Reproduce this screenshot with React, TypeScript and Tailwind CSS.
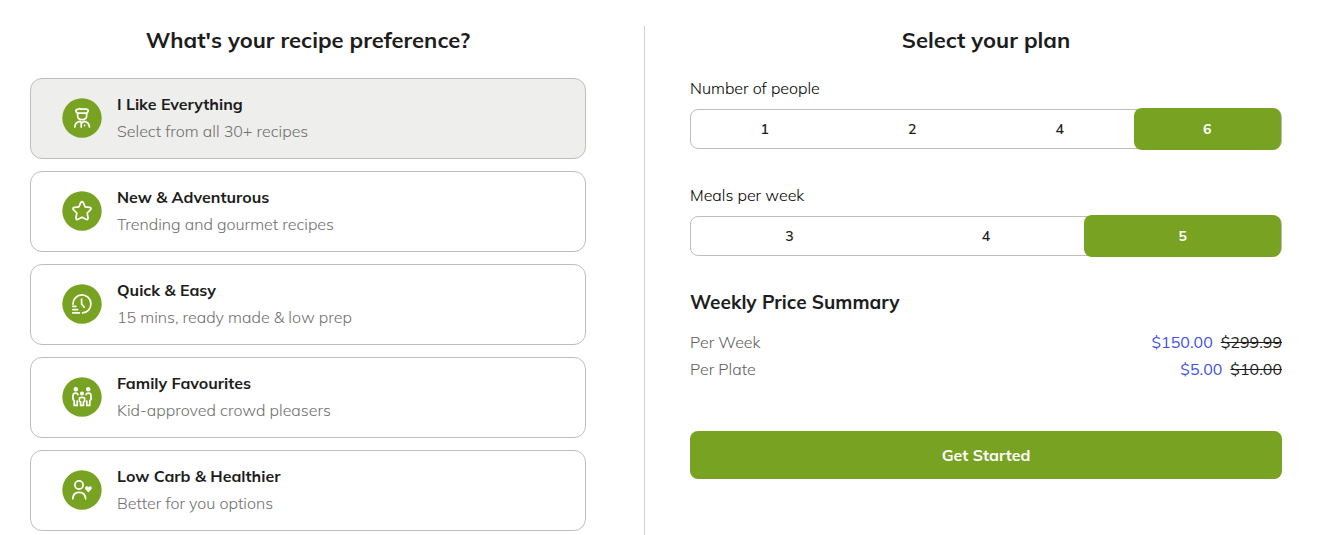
import React, { useState } from 'react';

const iconProps = {
    viewBox: '0 0 40 40',
    className: 'h-10 w-10 shrink-0',
    fill: 'none',
    stroke: 'white',
    strokeWidth: 1.7,
    strokeLinecap: 'round' as const,
    strokeLinejoin: 'round' as const,
    'aria-hidden': true,
};

const Disc: React.FC = () => <circle cx="20" cy="20" r="19.7" fill="#78a222" stroke="none" />;

const ChefIcon: React.FC = () => (
    <svg {...iconProps}>
        <Disc />
        <path d="M15.4 15.2 L14.4 14.2 C13.2 12.6 14.2 11 16 11.4 C17 10.6 18.4 10.7 19 11.4 C20 10.7 21 10.7 22 11.4 C23 10.7 24 10.9 24.6 11.4 C26.2 11.2 26.8 12.8 25.6 14.2 L24.8 15.2 Z" />
        <path d="M15.6 15.6 V18 C15.6 20.2 17.4 21.6 20 21.6 S24.6 20.2 24.6 18 V15.6" />
        <path d="M12.8 29 C13 25.6 15.2 23.8 18 23.4 L20 24.8 L22.2 23.4 C25 23.8 27.2 25.6 27.4 29 M19.2 25 V29 M22.6 27.4 V27.5" />
    </svg>
);

const StarIcon: React.FC = () => (
    <svg {...iconProps}>
        <Disc />
        <path d="M18.7 11.6 Q20 9.6 21.3 11.6 L23 15.8 L27.6 16.4 Q30 17 28.4 18.9 L25.2 22 L26 26.6 Q26.2 29.2 24 28.3 L20 26.2 L16 28.3 Q13.8 29.2 14 26.6 L14.8 22 L11.6 18.9 Q10 17 12.4 16.4 L17 15.8 Z" />
    </svg>
);

const ClockIcon: React.FC = () => (
    <svg {...iconProps}>
        <Disc />
        <path d="M10.9 20.2 A9 9 0 1 1 20.6 28.9 M19.6 15 V20 L22.2 23.2" />
        <path d="M10.8 22.3 H13.8 M10.8 25.6 H15.6 M10.8 28.9 H17.4" />
    </svg>
);

const FamilyIcon: React.FC = () => (
    <svg {...iconProps}>
        <Disc />
        <g fill="white" stroke="none">
            <circle cx="13.8" cy="12.2" r="2.2" />
            <circle cx="26.2" cy="12.2" r="2.2" />
            <circle cx="20" cy="16.6" r="2" />
        </g>
        <path d="M16 17.6 Q15.8 16.2 13.6 16.2 Q11 16.2 11 18.8 V22.4 L12.2 23.6 V28.4 H15.2 V24" />
        <path d="M24 17.6 Q24.2 16.2 26.4 16.2 Q29 16.2 29 18.8 V22.4 L27.8 23.6 V28.4 H24.8 V24" />
        <path d="M18.6 28.4 V25 L17.4 24 V21.6 Q17.4 20.4 20 20.4 T22.6 21.6 V24 L21.4 25 V28.4 Z" />
    </svg>
);

const HealthIcon: React.FC = () => (
    <svg {...iconProps}>
        <Disc />
        <circle cx="17" cy="15" r="4.1" />
        <path d="M10.8 28.8 C11 24.6 13.4 22.4 17 22.4 S23.4 24.6 23.6 28.8" />
        <path d="M26.4 22.4 L23.6 19.6 C21.8 17.2 24.8 15 26.4 17.3 C28 15 31 17.2 29.2 19.6 Z" fill="white" stroke="none" />
    </svg>
);

const preferences = [
    { title: 'I Like Everything', text: 'Select from all 30+ recipes', Icon: ChefIcon },
    { title: 'New & Adventurous', text: 'Trending and gourmet recipes', Icon: StarIcon },
    { title: 'Quick & Easy', text: '15 mins, ready made & low prep', Icon: ClockIcon },
    { title: 'Family Favourites', text: 'Kid-approved crowd pleasers', Icon: FamilyIcon },
    { title: 'Low Carb & Healthier', text: 'Better for you options', Icon: HealthIcon },
];

const prices = [
    { label: 'Per Week', price: '$150.00', old: '$299.99' },
    { label: 'Per Plate', price: '$5.00', old: '$10.00' },
];

interface OptionBarProps {
    id: string;
    label: string;
    options: number[];
    value: number;
    onChange: (value: number) => void;
}

const OptionBar: React.FC<OptionBarProps> = ({ id, label, options, value, onChange }) => (
    <div>
        <p id={id} className="mb-[9px] text-base leading-6 font-light text-black">{label}</p>
        <div role="group" aria-labelledby={id} className="flex h-10 rounded-lg border border-[#bdbdbd]">
            {options.map(option => (
                <button
                    key={option}
                    type="button"
                    aria-pressed={option === value}
                    onClick={() => onChange(option)}
                    className={
                        option === value
                            ? '-my-0.5 flex-1 rounded-lg bg-[#78a222] text-sm font-bold text-white'
                            : 'flex-1 text-sm font-semibold text-[#1d1d1d]'
                    }
                >
                    {option}
                </button>
            ))}
        </div>
    </div>
);

const App: React.FC = () => {
    const [preference, setPreference] = useState(0);
    const [people, setPeople] = useState(6);
    const [meals, setMeals] = useState(5);

    return (
        <main className="grid min-h-screen grid-cols-[644fr_675fr] bg-white pt-[26px] font-['Mulish','Open_Sans',sans-serif] text-[#1d1d1d]">
            <section className="pr-[58px] pl-[30px]">
                <h2 className="mb-6 text-center text-[22px] leading-7 font-bold">What's your recipe preference?</h2>
                <div className="flex flex-col gap-3">
                    {preferences.map(({ title, text, Icon }, index) => (
                        <button
                            key={title}
                            type="button"
                            aria-pressed={index === preference}
                            onClick={() => setPreference(index)}
                            className={`flex min-h-[81px] items-center gap-[15px] rounded-xl border border-[#bdbdbd] px-[31px] pb-0.5 text-left ${index === preference ? 'bg-[#eeeeec]' : 'bg-white'}`}
                        >
                            <Icon />
                            <span className="flex flex-col text-base leading-[27px]">
                                <span className="font-bold">{title}</span>
                                <span className="font-light text-[#6f6f6f]">{text}</span>
                            </span>
                        </button>
                    ))}
                </div>
            </section>

            <section className="border-l border-[#cfcfcf] pr-[37px] pl-[45px]">
                <h2 className="mb-[22px] text-center text-[22px] leading-7 font-bold">Select your plan</h2>
                <div className="flex flex-col gap-[34px]">
                    <OptionBar id="people" label="Number of people" options={[1, 2, 4, 6]} value={people} onChange={setPeople} />
                    <OptionBar id="meals" label="Meals per week" options={[3, 4, 5]} value={meals} onChange={setMeals} />
                </div>

                <h3 className="mt-8 mb-[13px] text-[19px] leading-7 font-bold">Weekly Price Summary</h3>
                <dl className="text-base leading-[27px]">
                    {prices.map(({ label, price, old }) => (
                        <div key={label} className="flex justify-between">
                            <dt className="font-light text-[#5f5f5f]">{label}</dt>
                            <dd className="flex gap-2">
                                <span className="text-[#3f51e0]">{price}</span>
                                <s>{old}</s>
                            </dd>
                        </div>
                    ))}
                </dl>

                <button type="button" className="mt-12 h-12 w-full rounded-lg bg-[#78a222] text-base font-bold text-white">
                    Get Started
                </button>
            </section>
        </main>
    );
};

export default App;
